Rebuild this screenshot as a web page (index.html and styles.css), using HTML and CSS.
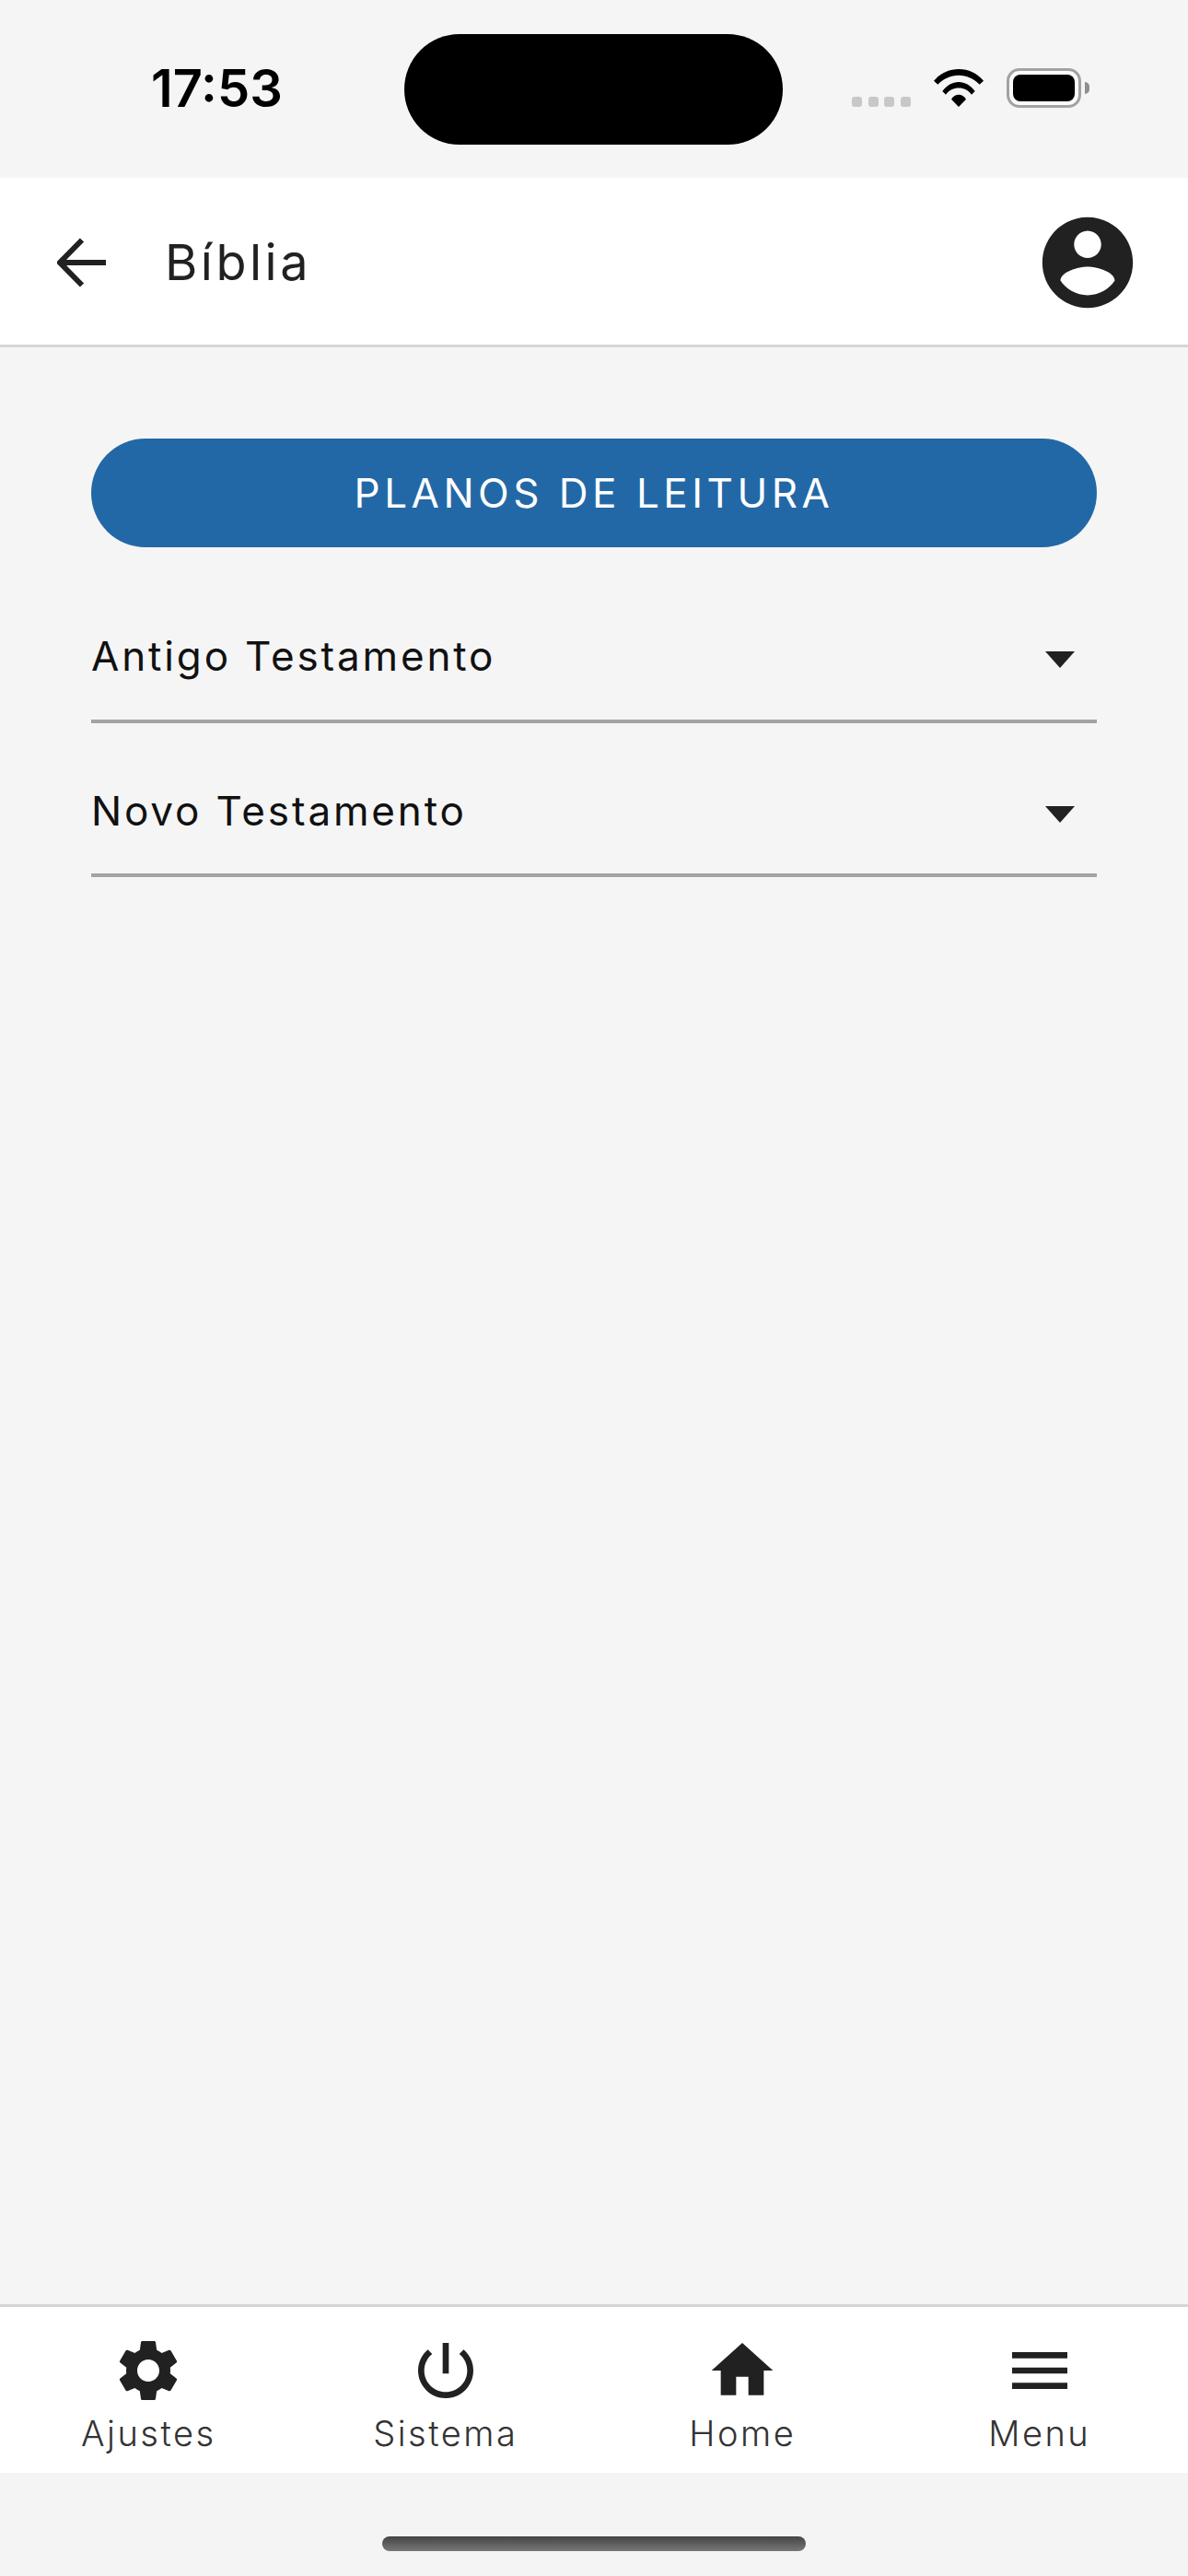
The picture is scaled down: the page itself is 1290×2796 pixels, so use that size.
FILE: index.html
```html
<!DOCTYPE html>
<html lang="pt">
<head>
    <meta charset="UTF-8">
    <meta name="viewport" content="width=device-width, initial-scale=1.0">
    <title>Bíblia</title>
    <link rel="stylesheet" href="styles.css">
</head>
<body>
    <!-- Status bar -->
    <div class="status-bar">
        <span class="clock">17:53</span>
        <div class="island"></div>
        <div class="signal"><i></i><i></i><i></i><i></i></div>
        <svg class="wifi" viewBox="0 0 54 41">
            <path d="M0 12.700C7 4.500 16.500 0 27 0S47 4.500 54 12.700L49.700 16.700C43.500 10.500 35.500 6.700 27 6.700S10.500 10.500 4.300 16.700z"/>
            <path d="M9.300 24C14 17.500 20.500 14 27 14S40 17.500 44.700 24L41 27.700C37.500 23 32.500 20.500 27 20.500S16.500 23 13 27.700z"/>
            <path d="M19 32.700C21 29.500 24 27.700 27 27.700s6 1.800 8 5L27 41z"/>
        </svg>
        <div class="battery"><div class="battery-fill"></div></div>
        <div class="battery-nub"></div>
    </div>

    <!-- App bar -->
    <header class="app-bar">
        <svg class="back-icon" viewBox="0 0 54 54">
            <path d="M53 27H4M27 2.500 3 27l24 24.500" fill="none" stroke="#212121" stroke-width="6"/>
        </svg>
        <h1 class="title">Bíblia</h1>
        <svg class="avatar-icon" viewBox="0 0 24 24">
            <path d="M12 2C6.480 2 2 6.480 2 12s4.480 10 10 10 10-4.480 10-10S17.520 2 12 2zm0 3c1.660 0 3 1.340 3 3s-1.340 3-3 3-3-1.340-3-3 1.340-3 3-3zm0 14.200c-2.500 0-4.710-1.280-6-3.220.030-1.990 4-3.080 6-3.080 1.990 0 5.970 1.090 6 3.080-1.290 1.940-3.500 3.220-6 3.220z"/>
        </svg>
    </header>

    <!-- Content -->
    <main class="content">
        <button class="plans-button">PLANOS DE LEITURA</button>
        <div class="select-row">
            <span class="select-label">Antigo Testamento</span>
            <span class="select-arrow"></span>
        </div>
        <div class="select-row">
            <span class="select-label">Novo Testamento</span>
            <span class="select-arrow"></span>
        </div>
    </main>

    <!-- Bottom tabs -->
    <nav class="tab-bar">
        <div class="tab">
            <svg viewBox="0 0 24 24"><path d="M19.140 12.940c.040-.300.060-.610.060-.940 0-.320-.020-.640-.070-.940l2.030-1.580c.180-.140.230-.410.120-.610l-1.920-3.320c-.120-.220-.370-.290-.590-.220l-2.390.960c-.500-.380-1.030-.700-1.620-.940L14.400 2.810c-.040-.240-.240-.410-.480-.410h-3.840c-.240 0-.430.170-.470.410L9.250 5.350c-.590.240-1.130.570-1.620.940L5.240 5.330c-.220-.080-.470 0-.590.220L2.740 8.870c-.120.210-.080.470.120.610l2.030 1.580c-.050.300-.090.630-.090.940s.020.640.070.940l-2.030 1.580c-.180.140-.230.410-.120.610l1.920 3.320c.120.220.370.290.590.220l2.390-.960c.500.380 1.030.700 1.620.940l.360 2.540c.050.240.240.410.480.410h3.840c.240 0 .440-.170.470-.410l.360-2.540c.590-.240 1.130-.560 1.620-.94l2.390.960c.220.080.470 0 .590-.220l1.920-3.320c.120-.220.070-.470-.120-.610l-2.010-1.580zM12 15.600c-1.980 0-3.600-1.620-3.600-3.600s1.620-3.600 3.600-3.600 3.600 1.620 3.600 3.600-1.620 3.600-3.600 3.600z"/></svg>
            <span>Ajustes</span>
        </div>
        <div class="tab">
            <svg viewBox="0 0 24 24"><path d="M13 3h-2v10h2V3zm4.830 2.170l-1.420 1.420C17.990 7.860 19 9.810 19 12c0 3.870-3.130 7-7 7s-7-3.130-7-7c0-2.190 1.010-4.140 2.580-5.420L6.170 5.170C4.230 6.820 3 9.260 3 12c0 4.970 4.030 9 9 9s9-4.030 9-9c0-2.740-1.230-5.180-3.170-6.830z"/></svg>
            <span>Sistema</span>
        </div>
        <div class="tab">
            <svg viewBox="0 0 24 24"><path d="M10 20v-6h4v6h5v-8h3L12 3 2 12h3v8z"/></svg>
            <span>Home</span>
        </div>
        <div class="tab">
            <svg viewBox="0 0 24 24"><path d="M3 18h18v-2H3v2zm0-5h18v-2H3v2zm0-7v2h18V6H3z"/></svg>
            <span>Menu</span>
        </div>
    </nav>

    <div class="home-area">
        <div class="home-indicator"></div>
    </div>
</body>
</html>
```

FILE: styles.css
```css
:root {
    --page-bg: #f5f5f5;
    --dark: #212121;
    --blue: #2368a6;
}

* {
    box-sizing: border-box;
}

body {
    margin: 0;
    width: 1290px;
    height: 2796px;
    display: flex;
    flex-direction: column;
    background: var(--page-bg);
    font-family: Inter, "Liberation Sans", sans-serif;
    overflow: hidden;
}

/* Status bar */
.status-bar {
    height: 193px;
    flex: none;
    display: flex;
    align-items: flex-start;
    padding-left: 164px;
}

.clock {
    width: 275px;
    margin-top: 64px;
    font-size: 56px;
    line-height: 64px;
    font-weight: 600;
    color: #000;
}

.island {
    width: 411px;
    height: 120px;
    margin-top: 37px;
    border-radius: 60px;
    background: #000;
}

.signal {
    display: flex;
    gap: 6.500px;
    margin: 105px 0 0 75px;
}

.signal i {
    width: 11px;
    height: 11px;
    border-radius: 3px;
    background: #c8c8c8;
}

.wifi {
    width: 54px;
    height: 41px;
    margin: 75px 0 0 25px;
}

.battery {
    width: 81px;
    height: 43px;
    margin: 74px 0 0 25px;
    padding: 4px;
    border: 3px solid #a2a2a2;
    border-radius: 14px;
    background: #fbfbfb;
}

.battery-fill {
    width: 100%;
    height: 100%;
    border-radius: 8px;
    background: #000;
}

.battery-nub {
    width: 5px;
    height: 13px;
    margin: 89px 0 0 4px;
    border-radius: 0 6px 6px 0;
    background: #8e8e8e;
}

/* App bar */
.app-bar {
    height: 184px;
    flex: none;
    display: flex;
    align-items: center;
    padding: 3px 50px 0 62px;
    background: #fff;
    border-bottom: 3px solid #d6d6d6;
}

.back-icon {
    width: 54px;
    height: 54px;
}

.title {
    flex: 1;
    margin: 0 0 0 63px;
    font-size: 54px;
    line-height: 64px;
    font-weight: 400;
    letter-spacing: 3.500px;
    color: var(--dark);
}

.avatar-icon {
    width: 118px;
    height: 118px;
    fill: var(--dark);
}

/* Content */
.content {
    flex: 1;
    padding: 99px 99px 0;
}

.plans-button {
    display: block;
    width: 100%;
    height: 118px;
    margin-bottom: 22px;
    border: none;
    border-radius: 59px;
    background: var(--blue);
    color: #fff;
    font-family: inherit;
    font-size: 44px;
    letter-spacing: 4.500px;
}

.select-row {
    height: 169px;
    display: flex;
    align-items: center;
    justify-content: space-between;
    padding: 26px 24px 0 0;
    border-bottom: 4px solid #a3a3a3;
}

.select-row + .select-row {
    height: 167px;
}

.select-label {
    font-size: 44px;
    letter-spacing: 2.850px;
    color: #111;
}

.select-arrow {
    width: 0;
    height: 0;
    margin-top: 8px;
    border-left: 16px solid transparent;
    border-right: 16px solid transparent;
    border-top: 18px solid var(--dark);
}

/* Bottom tabs */
.tab-bar {
    height: 183px;
    flex: none;
    display: flex;
    background: #fff;
    border-top: 3px solid #d6d6d6;
}

.tab {
    flex: 1;
    display: flex;
    flex-direction: column;
    align-items: center;
    padding-top: 29px;
    font-size: 38px;
    line-height: 46px;
    font-weight: 300;
    letter-spacing: 2.500px;
    color: #333;
}

.tab svg {
    width: 80px;
    height: 80px;
    margin-bottom: 5px;
    fill: var(--dark);
}

/* Home indicator */
.home-area {
    height: 112px;
    flex: none;
    display: flex;
    justify-content: center;
    padding-top: 69px;
    background: #f4f4f4;
}

.home-indicator {
    width: 460px;
    height: 16px;
    border-radius: 8px;
    background: linear-gradient(#444, #777);
}
```
